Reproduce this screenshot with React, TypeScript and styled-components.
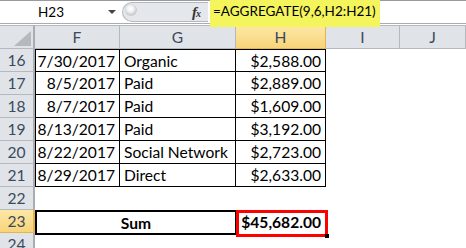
import React from 'react'
import styled, { createGlobalStyle, css } from 'styled-components'

const GlobalStyle = createGlobalStyle`
  html, body {
    margin: 0;
    padding: 0;
    background: #ffffff;
  }
  body {
    font-family: Lato, "Open Sans", "Liberation Sans", sans-serif;
    color: #000;
  }
`

const Window = styled.div`
  width: 466px;
  height: 248px;
  overflow: hidden;
  background: #fff;
`

const FormulaBar = styled.div`
  display: flex;
  align-items: stretch;
  height: 24px;
  box-sizing: border-box;
  border-top: 1px solid #989ca1;
  border-bottom: 1px solid #a9adb2;
  font-size: 13.5px;
`

const NameBox = styled.div`
  width: 120px;
  display: flex;
  align-items: center;
  background: #fff;
`

const NameText = styled.span`
  width: 102px;
  text-align: center;
  color: #000;
`

const DropArrow = styled.span`
  width: 0;
  height: 0;
  border-left: 4px solid transparent;
  border-right: 4px solid transparent;
  border-top: 4px solid #444;
  margin-left: 6px;
`

const MidSection = styled.div`
  width: 86px;
  margin: 1px 0 1px 2px;
  box-sizing: border-box;
  display: flex;
  align-items: center;
  justify-content: space-between;
  background: #e4e7eb;
  border: 1px solid #b4b8bd;
  border-right: none;
  border-radius: 11px 0 0 11px;
  padding: 0 8px 0 2px;
`

const Knob = styled.span`
  width: 12px;
  height: 12px;
  border-radius: 50%;
  background: radial-gradient(circle at 45% 40%, #ffffff 0, #f2f3f5 3px, #c9cdd2 6px);
  margin-top: -4px;
`

const Fx = styled.span`
  font-family: "Liberation Serif", serif;
  font-style: italic;
  font-weight: bold;
  font-size: 15px;
  color: #333;
  letter-spacing: -1px;

  small {
    font-size: 10px;
  }
`

const FormulaInput = styled.div`
  flex: 1;
  background: #fff;
  display: flex;
  align-items: flex-start;
  padding-left: 2px;
`

const Highlight = styled.span`
  background: #f4f45c;
  height: 27px;
  line-height: 22px;
  margin-top: -1px;
  padding: 0 4px 0 3px;
  position: relative;
  z-index: 2;
`

const Gap = styled.div`
  height: 1px;
  background: #fff;
`

const Sheet = styled.div`
  display: grid;
  grid-template-columns: 35px 85px 116px 90px 74px 66px;
  grid-template-rows: 24px repeat(9, 23px);
  font-size: 15.6px;
`

const headBase = css`
  box-sizing: border-box;
  background: #e0e4e9;
  color: #3c4a5c;
  border-right: 1px solid #b5b9be;
  border-bottom: 1px solid #b5b9be;
  display: flex;
  align-items: center;
  justify-content: center;
`

const activeHead = css`
  background: linear-gradient(#fde7a6, #f8d47a);
  border-color: #e5b450;
`

const Corner = styled.div`
  ${headBase};
  border-top: 1px solid #b5b9be;
  border-right: 2px solid #a9adb3;
  position: relative;
  display: block;
`

const CornerTriangle = styled.span`
  position: absolute;
  right: 2px;
  bottom: 2px;
  width: 17px;
  height: 15px;
  background: #b6babf;
  clip-path: polygon(100% 0, 100% 100%, 0 100%);
`

const ColHead = styled.div<{ $active?: boolean }>`
  ${headBase};
  border-top: 1px solid #b5b9be;
  ${(p) => p.$active && activeHead};
`

const RowHead = styled.div<{ $active?: boolean }>`
  ${headBase};
  border-right: 2px solid #a9adb3;
  ${(p) => p.$active && activeHead};
  ${(p) => p.$active && 'border-right-color: #e5b450;'};
`

const Cell = styled.div<{ $align?: 'left' | 'right' | 'center'; $lined?: boolean; $first?: boolean; $top?: boolean }>`
  box-sizing: border-box;
  display: flex;
  align-items: center;
  justify-content: ${(p) => (p.$align === 'right' ? 'flex-end' : p.$align === 'center' ? 'center' : 'flex-start')};
  padding: 0 4px 0 4px;
  white-space: nowrap;
  ${(p) =>
    p.$lined &&
    css`
      border-right: 1px solid #000;
      border-bottom: 1px solid #000;
    `};
  ${(p) => p.$first && 'border-left: 1px solid #000;'};
  ${(p) => p.$top && 'border-top: 1px solid #000;'};
`

const SumCell = styled.div`
  grid-column: span 2;
  box-sizing: border-box;
  border: 2px solid #000;
  margin: 0 -1px -2px 0;
  display: flex;
  align-items: center;
  justify-content: center;
  font-weight: bold;
`

const TotalCell = styled.div`
  position: relative;
  display: flex;
  align-items: center;
  justify-content: flex-end;
  padding: 0 5px;
  font-weight: bold;
  z-index: 3;
`

const RedBox = styled.span`
  position: absolute;
  top: 0;
  left: 0;
  right: -2px;
  bottom: -4px;
  border: 3px solid #ff0000;
  pointer-events: none;
`

const FillHandle = styled.span`
  position: absolute;
  right: -3px;
  bottom: -5px;
  width: 4px;
  height: 4px;
  background: #000;
`

const rows = [
  { n: 16, date: '7/30/2017', source: 'Organic', amount: '$2,588.00' },
  { n: 17, date: '8/5/2017', source: 'Paid', amount: '$2,889.00' },
  { n: 18, date: '8/7/2017', source: 'Paid', amount: '$1,609.00' },
  { n: 19, date: '8/13/2017', source: 'Paid', amount: '$3,192.00' },
  { n: 20, date: '8/22/2017', source: 'Social Network', amount: '$2,723.00' },
  { n: 21, date: '8/29/2017', source: 'Direct', amount: '$2,633.00' },
]

const columns = ['F', 'G', 'H', 'I', 'J']

export default function App() {
  return (
    <Window>
      <GlobalStyle />
      <FormulaBar>
        <NameBox>
          <NameText>H23</NameText>
          <DropArrow />
        </NameBox>
        <MidSection>
          <Knob />
          <Fx>
            f<small>x</small>
          </Fx>
        </MidSection>
        <FormulaInput>
          <Highlight>=AGGREGATE(9,6,H2:H21)</Highlight>
        </FormulaInput>
      </FormulaBar>
      <Gap />
      <Sheet>
        <Corner>
          <CornerTriangle />
        </Corner>
        {columns.map((c) => (
          <ColHead key={c} $active={c === 'H'}>
            {c}
          </ColHead>
        ))}

        {rows.map((r, i) => (
          <React.Fragment key={r.n}>
            <RowHead>{r.n}</RowHead>
            <Cell $align="right" $lined $first $top={i === 0}>
              {r.date}
            </Cell>
            <Cell $lined $top={i === 0}>
              {r.source}
            </Cell>
            <Cell $align="right" $lined $top={i === 0}>
              {r.amount}
            </Cell>
            <Cell />
            <Cell />
          </React.Fragment>
        ))}

        <RowHead>22</RowHead>
        <Cell />
        <Cell />
        <Cell />
        <Cell />
        <Cell />

        <RowHead $active>23</RowHead>
        <SumCell>Sum</SumCell>
        <TotalCell>
          $45,682.00
          <RedBox />
          <FillHandle />
        </TotalCell>
        <Cell />
        <Cell />

        <RowHead>24</RowHead>
        <Cell />
        <Cell />
        <Cell />
        <Cell />
        <Cell />
      </Sheet>
    </Window>
  )
}
